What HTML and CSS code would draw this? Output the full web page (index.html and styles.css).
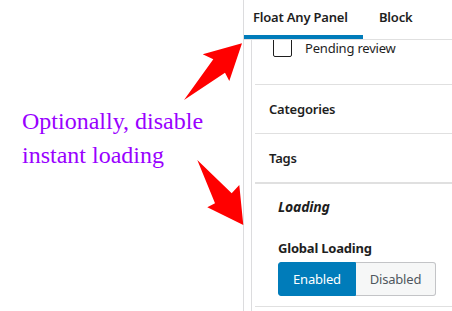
FILE: index.html
```html
<!DOCTYPE html>
<html>
<head>
<meta charset="utf-8">
<link rel="stylesheet" href="styles.css">
</head>
<body>
<div class="page">
  <div class="note">Optionally, disable<br>instant loading</div>
  <div class="sidebar">
    <div class="tabs">
      <div class="tab active">Float Any Panel</div>
      <div class="tab">Block</div>
    </div>
    <div class="content">
      <div class="row-check">
        <span class="checkbox"></span>
        <span class="check-label">Pending review</span>
      </div>
      <div class="panel-row">Categories</div>
      <div class="panel-row">Tags</div>
      <div class="loading">
        <div class="loading-title">Loading</div>
        <div class="field-label">Global Loading</div>
        <div class="toggle">
          <span class="btn on">Enabled</span>
          <span class="btn off">Disabled</span>
        </div>
      </div>
    </div>
  </div>
  <svg class="arrows" width="452" height="311" viewBox="0 0 452 311">
    <polygon points="242,43.3 202.7,54.3 213.3,59.3 184,100 225,72.7 229.3,81" fill="#ff0000"/>
    <polygon points="197.3,160 231.7,193.3 239.3,185 243.3,225 207.3,207.3 215,203.3" fill="#ff0000"/>
  </svg>
</div>
</body>
</html>
```
FILE: styles.css
```css
* { box-sizing: border-box; }
html, body { margin: 0; padding: 0; background: #fff; }
.page {
  position: relative;
  display: flex;
  width: 452px;
  height: 311px;
  overflow: hidden;
}
.note {
  width: 243px;
  flex: none;
  padding: 104px 0 0 22px;
  font-family: "Liberation Serif", serif;
  font-size: 24px;
  line-height: 34px;
  color: #9900ff;
}
.sidebar {
  flex: 1;
  border-left: 1px solid #dcdcde;
  display: flex;
  flex-direction: column;
  font-family: "Noto Sans", sans-serif;
  font-size: 13px;
  letter-spacing: -0.2px;
  color: #1e1e1e;
}
.tabs {
  display: flex;
  height: 40px;
  border-bottom: 1px solid #e0e0e0;
  flex: none;
}
.tab {
  display: flex;
  align-items: center;
  padding: 0 16px 5px 16px;
  font-weight: 600;
  white-space: nowrap;
}
.tab.active {
  width: 119px;
  flex: none;
  padding-left: 9px;
  padding-right: 0;
  border-bottom: 4px solid #007cba;
  padding-bottom: 1px;
  height: 39px;
}
.content {
  flex: 1;
  margin-left: 7px;
  border-left: 1px solid #dcdcde;
  overflow: hidden;
  display: flex;
  flex-direction: column;
}
.row-check {
  display: flex;
  align-items: flex-start;
  height: 44px;
  padding-left: 21px;
  flex: none;
}
.checkbox {
  width: 19px;
  height: 20px;
  margin-top: -3px;
  border: 1px solid #1e1e1e;
  border-radius: 2px;
  flex: none;
}
.check-label {
  margin-left: 13px;
  line-height: 18px;
  margin-top: -1px;
}
.panel-row {
  margin-left: 3px;
  height: 49px;
  border-top: 1px solid #e0e0e0;
  padding-left: 14px;
  display: flex;
  align-items: center;
  font-weight: 600;
  flex: none;
}
.loading {
  margin-left: 3px;
  border-top: 2px solid #e0e0e0;
  border-bottom: 1px solid #e0e0e0;
  padding: 13px 0 10px 23px;
  flex: none;
}
.loading-title {
  font-weight: 700;
  font-style: italic;
  font-size: 14px;
  line-height: 20px;
}
.field-label {
  margin-top: 21px;
  font-weight: 700;
  line-height: 20px;
}
.toggle {
  display: flex;
  margin-top: 4px;
}
.btn {
  height: 34px;
  display: flex;
  align-items: center;
  justify-content: center;
  font-size: 13px;
}
.btn.on {
  width: 78px;
  background: #007cba;
  border: 1px solid #007cba;
  color: #fff;
  border-radius: 3px 0 0 3px;
}
.btn.off {
  width: 80px;
  background: #f6f7f7;
  border: 1px solid #c3c4c7;
  border-left: none;
  color: #50575e;
  border-radius: 0 3px 3px 0;
}
.arrows {
  position: absolute;
  left: 0;
  top: 0;
  pointer-events: none;
}
```
